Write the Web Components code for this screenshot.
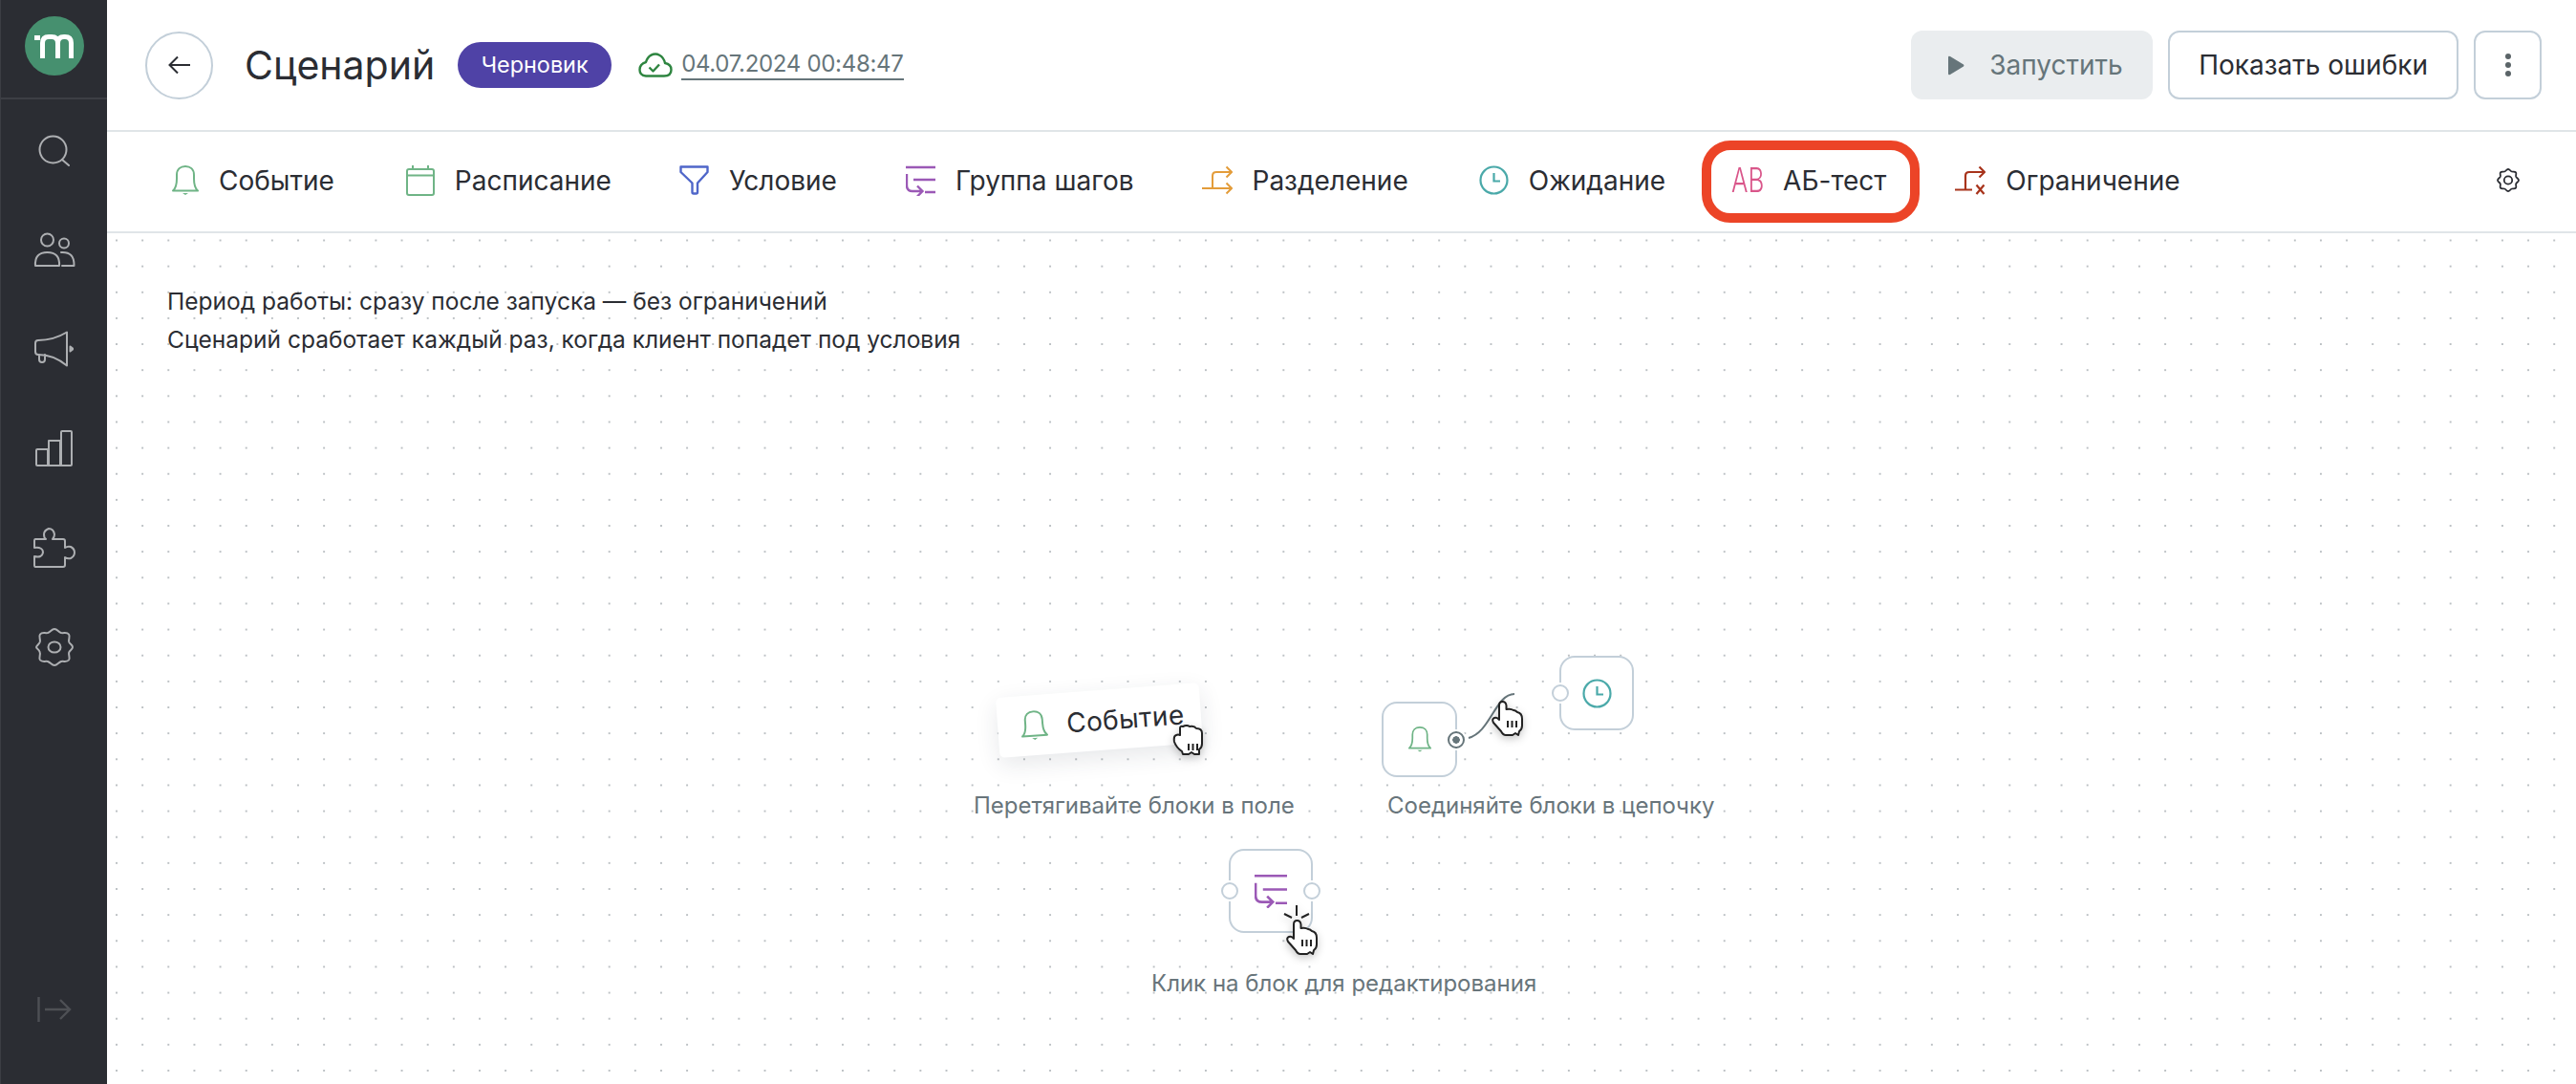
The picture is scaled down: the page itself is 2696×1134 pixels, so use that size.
<!DOCTYPE html>
<html lang="ru">
<head>
<meta charset="utf-8">
<title>Сценарий</title>
<style>
html,body{margin:0;height:100%;background:#fff}
body{display:flex;height:1134px;overflow:hidden;font-family:Inter,"Liberation Sans",sans-serif;color:#2b2d33}
main-area{flex:1;min-width:0}
</style>
</head>
<body>
<app-sidebar></app-sidebar>
<main-area>
  <top-bar></top-bar>
  <block-bar>
    <block-item icon="bell" label="Событие"></block-item>
    <block-item icon="calendar" label="Расписание" style="margin-left:3px"></block-item>
    <block-item icon="funnel" label="Условие" style="margin-left:-1px"></block-item>
    <block-item icon="group" label="Группа шагов"></block-item>
    <block-item icon="split" label="Разделение" style="margin-left:-1px"></block-item>
    <block-item icon="clock" label="Ожидание" style="margin-left:2px"></block-item>
    <block-item icon="ab" label="АБ-тест" marked style="margin-left:-3px"></block-item>
    <block-item icon="limit" label="Ограничение"></block-item>
  </block-bar>
  <flow-canvas>
    <div slot="info">Период работы: сразу после запуска — без ограничений</div>
    <div slot="info">Сценарий сработает каждый раз, когда клиент попадет под условия</div>

    <drag-card x="932" y="478"></drag-card>
    <hand-cursor x="1116" y="514" kind="fist"></hand-cursor>
    <hint-label x="907" y="584">Перетягивайте блоки в поле</hint-label>

    <flow-node x="1334" y="490" size="79" icon="bell" iconsize="24" right="active"></flow-node>
    <flow-node x="1520" y="442" size="78" icon="clock" left="on"></flow-node>
    <flow-wire x="1418" y="472"></flow-wire>
    <hand-cursor x="1450" y="490" kind="point"></hand-cursor>
    <hint-label x="1340" y="584">Соединяйте блоки в цепочку</hint-label>

    <flow-node x="1174" y="644" size="88" icon="group" iconsize="34" left="on" right="on"></flow-node>
    <hand-cursor x="1235" y="719" kind="click"></hand-cursor>
    <hint-label x="1093" y="770">Клик на блок для редактирования</hint-label>
  </flow-canvas>
</main-area>

<script>
const ICONS = {
  bell: `<svg width="28" height="31" viewBox="0 0 28 31" fill="none" stroke="#6fb486" stroke-width="2" stroke-linejoin="round"><path d="M1 26.500C4 24 5 20 5 14v-4C5 4 9 1 14 1s9 3 9 9v4c0 6 1 10 4 12.500z"/><path d="M11 29h6l-3 2z" fill="#6fb486" stroke="none"/></svg>`,
  calendar: `<svg width="30" height="32" viewBox="0 0 30 32" fill="none" stroke="#6fb486" stroke-width="2"><rect x="1" y="4" width="28" height="27" rx="2"/><path d="M1 10.500h28M7 0v4M23 0v4"/></svg>`,
  funnel: `<svg width="31" height="31" viewBox="0 0 31 31" fill="none" stroke="#4f66c9" stroke-width="2.400" stroke-linejoin="round"><path d="M1.500 1.500h28v5.500L19 18.500V28q0 1.500-1.500 1.500h-2.500q-1.500 0-1.500-1.500V18.500L1.500 7z"/></svg>`,
  group: `<svg width="31" height="32" viewBox="0 0 31 32" fill="none" stroke="#9b59b6" stroke-width="2.400"><path d="M0 2h31M8 15h23M20 28h11M1 9v12q0 6 6 6h10M12 21.500l5.500 5.500-5.500 5.500"/></svg>`,
  split: `<svg width="32" height="31" viewBox="0 0 32 31" fill="none" stroke="#e39c3a" stroke-width="2"><path d="M0 24h31M25.500 18.500l5.500 5.500-5.500 5.500M11 24V11q0-4 4-4h16M25.500 1.500L31 7l-5.500 5.500"/></svg>`,
  clock: `<svg width="31" height="31" viewBox="0 0 31 31" fill="none" stroke="#4aa9a9" stroke-width="2.200"><circle cx="15.500" cy="15.500" r="14"/><path d="M15.500 8v8.500h6.500"/></svg>`,
  limit: `<svg width="32" height="31" viewBox="0 0 32 31" fill="none" stroke="#a8341c" stroke-width="2.200"><path d="M0 25.500h18M11 25.500V11q0-4 4-4h16M25.500 1.500L31 7l-5.500 5.500M22.500 20.500l8 9.500M30.500 20.500l-8 9.500"/></svg>`,
  ab: `<span style="display:block;width:33px;height:31px;line-height:31px;color:#d9568a;font-size:36px;font-weight:300;transform:scaleX(.72);transform-origin:0 50%;white-space:nowrap">AB</span>`,
  gear: `<svg width="26" height="25" viewBox="0 0 26 25" fill="none" stroke="#2b2d33" stroke-width="1.800" stroke-linejoin="round"><path d="M13 1c1.800 0 2.200 2 3.800 2.500 1.600.4 3.200-.4 4.200.8 1 1.300-.3 2.800.2 4.400.5 1.400 2.800 2 2.800 3.800s-2.300 2.400-2.800 3.800c-.5 1.600.8 3.100-.2 4.400-1 1.200-2.600.4-4.200.8C15.200 22 14.800 24 13 24s-2.200-2-3.800-2.500c-1.600-.4-3.200.4-4.200-.8-1-1.300.3-2.800-.2-4.400C4.300 14.900 2 14.300 2 12.500s2.300-2.400 2.800-3.800c.5-1.600-.8-3.100.2-4.400 1-1.200 2.600-.4 4.200-.8C10.800 3 11.200 1 13 1z"/><circle cx="13" cy="12.500" r="4.200"/></svg>`
}

class AppSidebar extends HTMLElement {
  constructor() {
    super()
    const g = `fill="none" stroke="#adafb2" stroke-width="2" stroke-linejoin="round" stroke-linecap="round"`
    this.attachShadow({mode: "open"}).innerHTML = `
    <style>
      :host{display:flex;flex-direction:column;width:112px;height:1134px;flex:none;background:#2b2d33;border-left:1px solid #3c3e44;box-sizing:border-box}
      .logo{height:102px;flex:none;display:flex;align-items:center;justify-content:center;border-bottom:2px solid #3d3f45}
      .logo span{width:62px;height:62px;border-radius:50%;background:#46906f;display:flex;align-items:center;justify-content:center;margin-top:-6px}
      .list{display:flex;flex-direction:column;margin-top:1px}
      .list div{height:104px;display:flex;align-items:center;justify-content:center}
      .bottom{margin-top:auto;height:92px;display:flex;justify-content:center;box-sizing:border-box}
    </style>
    <div class="logo"><span><svg width="41" height="25" viewBox="0 0 41 25" fill="none" stroke="#fff" stroke-width="5"><path d="M0 3.500h6M8.500 25V9q0-6.500 6.500-6.500h3q6.500 0 6.500 6.500v16M24.500 9q0-6.500 6.500-6.500h1q6.500 0 6.500 6.500v16"/></svg></span></div>
    <div class="list">
      <div><svg width="34" height="33" viewBox="0 0 34 33" ${g}><circle cx="15.500" cy="15.500" r="14"/><path d="M25 26l7 6"/></svg></div>
      <div><svg width="44" height="37" viewBox="0 0 44 37" ${g}><circle cx="14.500" cy="8" r="6.500"/><path d="M2 35q-1-14 12.500-14T27 35z"/><circle cx="32" cy="11.500" r="5"/><path d="M29 21q14-1 13.500 14H30"/></svg></div>
      <div><svg width="41" height="38" viewBox="0 0 41 38" ${g}><path d="M1 13q0-3 3-3 16 0 30-8.500V36.500Q20 25 4 25q-3 0-3-3zM5 25v5q0 3 3 3t3-3v-5"/><path d="M37.500 16.500l3 2.500-3 2.500z" fill="#adafb2"/></svg></div>
      <div><svg width="40" height="38" viewBox="0 0 40 38" ${g}><path d="M2 20h11v17H2q-1 0-1-1V21q0-1 1-1zM14 11h12v26H14zM27 2q0-1 1-1h9q1 0 1 1v34q0 1-1 1H27z"/></svg></div>
      <div><svg width="44" height="43" viewBox="0 0 44 43" ${g}><path d="M2 12h11q-2-1-2-5t5-6q5 0 6 6 0 3-2 5h11q2 0 2 2v7q3-2 6-1 4 2 4 6t-4 6q-3 1-6-1v8q0 2-2 2H2q-1 0-1-2v-9q8 2 9-4 0-6-9-5V14q0-2 1-2z"/></svg></div>
      <div><svg width="40" height="40" viewBox="0 0 40 40" ${g}><path d="M20 1c3 0 4 3 7 4 3 .6 6-1 8 1.500 1.800 2.500-.6 5 .2 8 .8 2.500 3.800 3 3.800 5.500s-3 3-3.800 5.500c-.8 3 1.600 5.500-.2 8-2 2.500-5 .9-8 1.500-3 1-4 4-7 4s-4-3-7-4c-3-.6-6 1-8-1.500-1.800-2.500.6-5-.2-8C4 22 1 21.500 1 20s3-3 3.800-5.500c.8-3-1.600-5.500.2-8C7 4 10 5.600 13 5c3-1 4-4 7-4z"/><ellipse cx="20" cy="20" rx="6.500" ry="5.500"/></svg></div>
    </div>
    <div class="bottom"><svg width="36" height="28" viewBox="0 0 36 28" fill="none" stroke="#4e5055" stroke-width="2.400"><path d="M1.500 1v26M8 14h26M24 4l10 10-10 10"/></svg></div>`
  }
}

class TopBar extends HTMLElement {
  constructor() {
    super()
    this.attachShadow({mode: "open"}).innerHTML = `
    <style>
      :host{display:flex;align-items:center;height:138px;box-sizing:border-box;border-bottom:2px solid #e0e5e8;padding:0 36px 0 40px;background:#fff}
      .back{width:71px;height:71px;border:2px solid #c3cfd9;border-radius:50%;box-sizing:border-box;display:flex;align-items:center;justify-content:center;margin-right:33px}
      h1{margin:0 24px 0 0;font-size:41px;font-weight:400;line-height:48px;color:#2b2d33}
      .badge{height:48px;line-height:47px;padding:0 24.500px;border-radius:24px;background:#4f42a6;color:#fff;font-size:23.400px;margin-right:28px}
      .saved{display:flex;align-items:center;gap:9px}
      .date{color:#66757a;font-size:24px;letter-spacing:-.3px;line-height:30px;border-bottom:2px solid #66757a}
      .right{margin-left:auto;display:flex;gap:16px}
      .btn{height:72px;box-sizing:border-box;border-radius:12px;font-size:28px;display:flex;align-items:center;border:2px solid #c3cfd9;background:#fff;padding:0 30px}
      .run{width:253px;border:0;background:#eaedef;color:#66757a;padding:0 0 0 39px;gap:26px}
      .more{width:71px;padding:0;justify-content:center}
    </style>
    <div class="back"><svg width="24" height="20" viewBox="0 0 24 20" fill="none" stroke="#2b2d33" stroke-width="2"><path d="M23 10H2M10 1.500L1.500 10l8.500 8.500"/></svg></div>
    <h1>Сценарий</h1>
    <div class="badge">Черновик</div>
    <div class="saved">
      <svg width="36" height="26" viewBox="0 0 36 26" fill="none" stroke="#2e8540" stroke-width="2.400" stroke-linejoin="round"><path d="M8 24.500h19q7.500 0 7.500-6.500 0-6-6.500-7C26 1.500 18 1.500 18 1.500 10 1.500 8 10 8 10q-6.500 2-6.500 8T8 24.500z"/><path d="M11.500 15.500l4 4 6.500-7"/></svg>
      <span class="date">04.07.2024 00:48:47</span>
    </div>
    <div class="right">
      <div class="btn run"><svg width="17" height="21" viewBox="0 0 17 21"><path d="M0 2q0-2 2-1l14 8.500q1 1 0 2L2 20q-2 1-2-1z" fill="#66757a"/></svg><span>Запустить</span></div>
      <div class="btn">Показать ошибки</div>
      <div class="btn more"><svg width="6" height="24" viewBox="0 0 6 24" fill="#5b6468"><circle cx="3" cy="3" r="3"/><circle cx="3" cy="12" r="3"/><circle cx="3" cy="21" r="3"/></svg></div>
    </div>`
  }
}

class BlockBar extends HTMLElement {
  constructor() {
    super()
    this.attachShadow({mode: "open"}).innerHTML = `
    <style>
      :host{display:flex;align-items:center;height:106px;box-sizing:border-box;border-bottom:2px solid #e0e5e8;padding:0 58px 3px 68px;gap:72px;background:#fff}
      .gear{margin-left:auto;display:flex}
    </style>
    <slot></slot>
    <div class="gear">${ICONS.gear}</div>`
  }
}

class BlockItem extends HTMLElement {
  connectedCallback() {
    this.attachShadow({mode: "open"}).innerHTML = `
    <style>
      :host{display:flex;align-items:center;gap:21px;position:relative;font-size:28px;line-height:34px;color:#2b2d33;white-space:nowrap}
      .icon{display:flex}
      .mark{position:absolute;left:-31px;right:-35px;top:-25px;bottom:-27px;border:10px solid #ec4427;border-radius:30px;pointer-events:none}
    </style>
    <span class="icon">${ICONS[this.getAttribute("icon")]}</span>
    <span>${this.getAttribute("label")}</span>
    ${this.hasAttribute("marked") ? '<div class="mark"></div>' : ""}`
  }
}

class FlowCanvas extends HTMLElement {
  constructor() {
    super()
    this.attachShadow({mode: "open"}).innerHTML = `
    <style>
      :host{display:block;position:relative;height:890px;overflow:hidden;
        background-color:#fff;
        background-image:radial-gradient(circle at center,#bcc1c4 0,#bcc1c4 .8px,transparent 1.400px);
        background-size:27.15px 27.15px;background-position:-3.575px -6.100px}
      .info{padding:51px 0 0 63px;font-size:24.500px;line-height:40px;color:#2b2d33}
    </style>
    <div class="info"><slot name="info"></slot></div>
    <slot></slot>`
  }
}

class Placed extends HTMLElement {
  place() {
    this.style.left = this.getAttribute("x") + "px"
    this.style.top = this.getAttribute("y") + "px"
  }
}

class HintLabel extends Placed {
  connectedCallback() {
    this.place()
    this.attachShadow({mode: "open"}).innerHTML = `
    <style>:host{position:absolute;font-size:24px;line-height:30px;color:#68757b;white-space:nowrap}</style>
    <slot></slot>`
  }
}

class DragCard extends Placed {
  connectedCallback() {
    this.place()
    this.attachShadow({mode: "open"}).innerHTML = `
    <style>
      :host{position:absolute;width:213px;height:63px;background:#fff;border-radius:5px;transform:rotate(-4.300deg);box-shadow:0 8px 24px rgba(40,50,60,.11);display:flex;align-items:center;padding-left:24px;box-sizing:border-box;gap:20px;font-size:28px;letter-spacing:.4px;color:#2b2d33}
    </style>
    ${ICONS.bell}<span>Событие</span>`
  }
}

class FlowNode extends Placed {
  connectedCallback() {
    this.place()
    const s = this.getAttribute("size")
    const iconSize = this.getAttribute("iconsize")
    const port = (side) => {
      const st = this.getAttribute(side)
      if (!st) return ""
      return `<i class="${side} ${st}"></i>`
    }
    this.attachShadow({mode: "open"}).innerHTML = `
    <style>
      :host{position:absolute;width:${s}px;height:${s}px;box-sizing:border-box;border:2px solid #c3cfd9;border-radius:16px;background:#fff;display:flex;align-items:center;justify-content:center}
      ${iconSize ? `svg{width:${iconSize}px;height:auto}` : ""}
      i{position:absolute;top:calc(50% - 9px);width:18px;height:18px;box-sizing:border-box;border:2px solid #c3cfd9;border-radius:50%;background:#fff;box-shadow:0 0 0 2px #fff}
      i.left{left:-10px}
      i.right{right:-10px}
      i.active{border-color:#66757a;background:radial-gradient(circle,#66757a 0,#66757a 3.500px,#fff 4px)}
    </style>
    ${ICONS[this.getAttribute("icon")]}
    ${port("left")}${port("right")}`
  }
}

class FlowWire extends Placed {
  connectedCallback() {
    this.place()
    this.attachShadow({mode: "open"}).innerHTML = `
    <style>:host{position:absolute;display:block;width:70px;height:70px}</style>
    <svg width="70" height="70" viewBox="0 0 70 70" fill="none" stroke="#66757a" stroke-width="2"><path d="M7 56C30 50 35 10 55 10"/></svg>`
  }
}

class HandCursor extends Placed {
  connectedCallback() {
    this.place()
    const kind = this.getAttribute("kind")
    const point = "M7 15V4q0-4 3.500-4t4 4v4q4.500-1 7.500 1 2 0 4 2 5 1 5 7v7q0 4-3 6l-1 4-3-2-3 2h-7q-3 0-5-4L1 22q-2-4 1-5t5 2z"
    const fist = "M7 11V4q0-3 3-2 4-2 7 0 5-1 7 2 6 0 6 5v11q0 4-3 6v5h-5l-3-2-3 2h-6l-1-3Q3 24 1 18q-1-6 2-7 2-1 4 0z"
    const rays = kind === "click" ? `<path d="M10 -16v11M-3 -7l8 4M23 -7l-8 4" stroke="#222" stroke-width="2" fill="none"/>` : ""
    this.attachShadow({mode: "open"}).innerHTML = `
    <style>:host{position:absolute;display:block;width:31px;height:36px;filter:drop-shadow(0 3px 4px rgba(0,0,0,.22))} svg{overflow:visible;display:block}</style>
    <svg width="31" height="36" viewBox="0 0 31 36">${rays}
      <path d="${kind === "fist" ? fist : point}" fill="#fff" stroke="#222" stroke-width="2" stroke-linejoin="round"/>
      <path d="M16 20v7M20.500 20v7M25 20v7" stroke="#222" stroke-width="2" fill="none"/>
    </svg>`
  }
}

customElements.define("app-sidebar", AppSidebar)
customElements.define("top-bar", TopBar)
customElements.define("block-bar", BlockBar)
customElements.define("block-item", BlockItem)
customElements.define("flow-canvas", FlowCanvas)
customElements.define("hint-label", HintLabel)
customElements.define("drag-card", DragCard)
customElements.define("flow-node", FlowNode)
customElements.define("flow-wire", FlowWire)
customElements.define("hand-cursor", HandCursor)
</script>
</body>
</html>
